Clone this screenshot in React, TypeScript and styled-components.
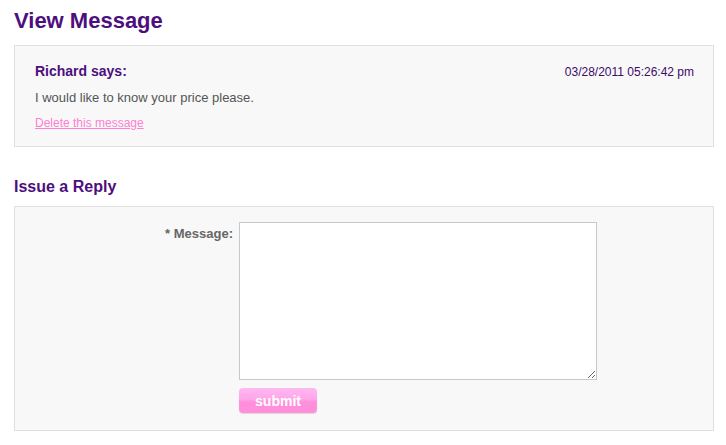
import React from "react";
import styled, { createGlobalStyle } from "styled-components";

const Global = createGlobalStyle`
  html, body { margin: 0; padding: 0; background: #fff; }
  body { font-family: "Liberation Sans", Arial, Helvetica, sans-serif; }
`;

const Page = styled.div`
  padding: 0 12px 0 14px;
`;

const Title = styled.h1`
  margin: 0;
  padding-top: 8px;
  font-size: 22px;
  line-height: 26px;
  font-weight: bold;
  color: #4d0e7e;
`;

const Panel = styled.div<{ $pad: string; $top: number }>`
  margin-top: ${(p) => p.$top}px;
  background: #f8f8f8;
  border: 1px solid #e0e0e0;
  padding: ${(p) => p.$pad};
`;

const HeadRow = styled.div`
  display: flex;
  justify-content: space-between;
  align-items: baseline;
`;

const Author = styled.div`
  font-size: 14px;
  font-weight: bold;
  color: #4d0e7e;
  line-height: 18px;
`;

const Stamp = styled.div`
  font-size: 12px;
  color: #3f0a6a;
`;

const Body = styled.p`
  margin: 10px 0 0;
  font-size: 13px;
  line-height: 16px;
  color: #555;
`;

const DeleteLink = styled.a`
  display: inline-block;
  margin-top: 10px;
  font-size: 12px;
  line-height: 15px;
  color: #ff7fd2;
  text-decoration: underline;
  cursor: pointer;
`;

const SubTitle = styled.h2`
  margin: 30px 0 0;
  font-size: 16px;
  line-height: 20px;
  font-weight: bold;
  color: #4d0e7e;
`;

const FormGrid = styled.div`
  display: grid;
  grid-template-columns: 218px 358px;
  column-gap: 6px;
  row-gap: 8px;
`;

const Label = styled.label`
  text-align: right;
  font-size: 13px;
  font-weight: bold;
  color: #666;
  padding-top: 4px;
`;

const TextArea = styled.textarea`
  box-sizing: border-box;
  width: 358px;
  height: 158px;
  border: 1px solid #c8c8c8;
  background: #fff;
  margin: 0;
  padding: 3px;
  resize: both;
  display: block;
`;

const Submit = styled.button`
  grid-column: 2;
  width: 78px;
  height: 25px;
  border: none;
  border-radius: 4px;
  background: linear-gradient(#ffb8f0 0%, #ffa6ea 45%, #ff8fdc 55%, #ff8edb 100%);
  box-shadow: 0 1px 1px rgba(0, 0, 0, 0.12);
  color: #fff;
  font-family: "Liberation Sans", Arial, sans-serif;
  font-size: 14px;
  font-weight: bold;
  padding: 0;
  cursor: pointer;
`;

export default function App() {
  return (
    <Page>
      <Global />
      <Title>View Message</Title>
      <Panel $top={11} $pad="16px 19px 15px 20px">
        <HeadRow>
          <Author>Richard says:</Author>
          <Stamp>03/28/2011 05:26:42 pm</Stamp>
        </HeadRow>
        <Body>I would like to know your price please.</Body>
        <DeleteLink>Delete this message</DeleteLink>
      </Panel>
      <SubTitle>Issue a Reply</SubTitle>
      <Panel $top={9} $pad="15px 0 17px">
        <FormGrid>
          <Label>* Message:</Label>
          <TextArea />
          <Submit>submit</Submit>
        </FormGrid>
      </Panel>
    </Page>
  );
}
